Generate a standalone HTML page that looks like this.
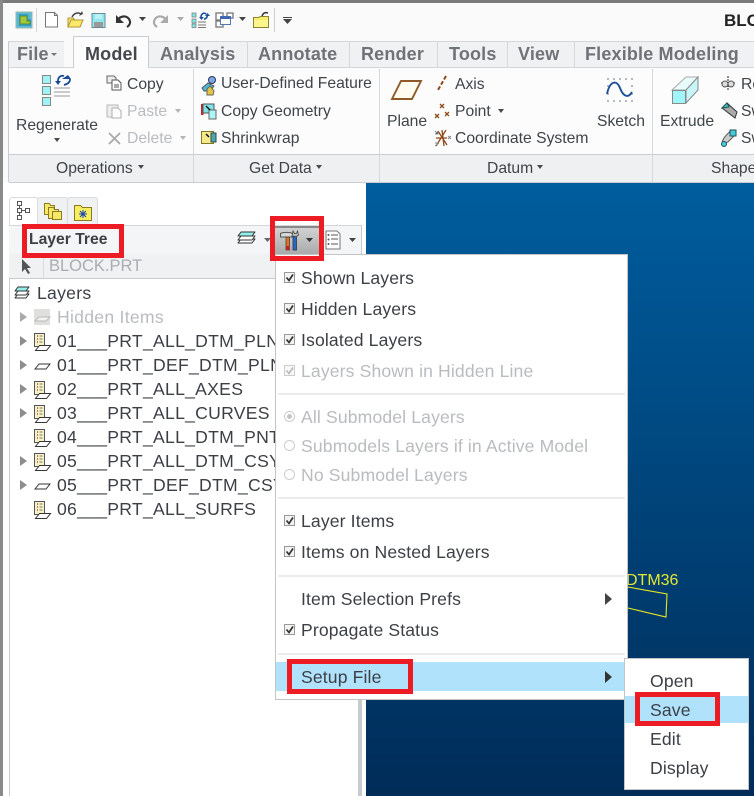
<!DOCTYPE html>
<html><head><meta charset="utf-8"><style>
html,body{margin:0;padding:0}
body{width:754px;height:796px;overflow:hidden;position:relative;background:#fafafa;font-family:"Liberation Sans",sans-serif;color:#3f444a}
.a,.t,svg.i{position:absolute}
.t{font-size:15.7px;line-height:20px;white-space:nowrap}
.tab{font-weight:bold;font-size:18px;letter-spacing:.17px;color:#6f7277;line-height:20px;position:absolute;white-space:nowrap}
.m{font-size:17.6px;letter-spacing:.13px;line-height:20px;position:absolute;white-space:nowrap;color:#3c4046}
.tr{font-size:17.6px;letter-spacing:.27px;line-height:20px;position:absolute;white-space:nowrap;color:#3c4046;left:57px}
.t.g,.m.g,.tr.g{color:#b9bcbf}
.r{position:absolute;border:5px solid #ed1c24;box-sizing:border-box}
.d{position:absolute;width:0;height:0;border-left:3.5px solid transparent;border-right:3.5px solid transparent;border-top:4px solid #4a4a4a}
.dg{border-top-color:#b5b5b5}
.sep{position:absolute;background:#ebebeb;height:2px;left:278px;width:347px}
.vl{position:absolute;background:#d5d8db;width:1px}
.exp{position:absolute;left:20px;width:0;height:0;border-top:5px solid transparent;border-bottom:5px solid transparent;border-left:7px solid #8d8d8d}
.clip{position:absolute;overflow:hidden;white-space:nowrap}
</style></head><body>
<!-- window frame -->
<div class="a" style="left:0;top:0;width:754px;height:3px;background:#7a7a7a"></div>
<div class="a" style="left:0;top:0;width:3px;height:796px;background:#8a8a8a"></div>

<!-- QAT -->
<svg class="i" style="left:0;top:0" width="300" height="40" viewBox="0 0 300 40">
<rect x="16" y="12" width="16" height="16" fill="#57b8d8" stroke="#9fb8a8"/><path d="M19 14h9v5h3v7H19z" fill="#2f9fd0"/><path d="M20 16h7v5h3v3H20z" fill="#a3c83c" stroke="#5c8a2c"/>
<rect x="36" y="8" width="1" height="24" fill="#d8d8d8"/>
<path d="M45.500 12.500h9l3 3v11.500h-12z" fill="#fff" stroke="#777"/><path d="M54.500 12.500v3h3" fill="none" stroke="#777"/>
<path d="M68 18h5l2 2h7l-2 7H68z" fill="#f5e36a" stroke="#b09a30"/><path d="M68 27l3-7h12l-3 7z" fill="#fbe96e" stroke="#b09a30"/><path d="M72 17c2-4 6-5 9-3" fill="none" stroke="#444" stroke-width="1.500"/><path d="M79 16l4-2-1-3z" fill="#444"/>
<rect x="92" y="13.500" width="13" height="14" fill="#8fe8ee" stroke="#6d8a92"/><rect x="94" y="22" width="9" height="5" fill="#999"/><rect x="95" y="14" width="7" height="5" fill="#b9f2f4"/>
<path d="M118 20c2-4 8-5 11-1 2 3 1 6-2 8" fill="none" stroke="#333" stroke-width="2.200"/><path d="M116 15v8h8z" fill="#333"/>
<path d="M139 17h7l-3.500 4z" fill="#444"/>
<path d="M166 20c-2-4-8-5-11-1-2 3-1 6 2 8" fill="none" stroke="#aaa" stroke-width="2.200"/><path d="M168 15v8h-8z" fill="#aaa"/>
<path d="M177 17h7l-3.500 4z" fill="#aaa"/>
<rect x="192" y="13" width="4" height="4" fill="#7fe6e6" stroke="#777" stroke-width=".7"/><rect x="192" y="19" width="4" height="4" fill="#7fe6e6" stroke="#777" stroke-width=".7"/><rect x="192" y="24" width="4" height="3.500" fill="#7fe6e6" stroke="#777" stroke-width=".7"/>
<path d="M198 22h8M198 25h8M198 27.500h8" stroke="#777"/><path d="M201 17c0-3 3-5 5-3M207 14c1 3-1 5-3 5" fill="none" stroke="#1a4fa0" stroke-width="1.600"/><path d="M199 17h5l-2.500 3zM205 16h5l-2.500-3z" fill="#1a4fa0"/>
<rect x="216" y="13" width="7" height="7" fill="#fff" stroke="#777" stroke-width="1.300"/><rect x="216" y="21" width="7" height="6" fill="#fff" stroke="#777" stroke-width="1.300"/><rect x="227" y="13" width="6" height="5" fill="#fff" stroke="#777" stroke-width="1.300"/><rect x="220.500" y="16.500" width="10" height="8" fill="#fff" stroke="#5077b8"/><rect x="220.500" y="16.500" width="10" height="2.500" fill="#3a66b0"/>
<path d="M239 17h7l-3.500 4z" fill="#444"/>
<path d="M253.500 17.500h5l2-1h8v11h-15z" fill="#f8ef70" stroke="#8c8530"/><path d="M254 20h14v7h-14z" fill="#fdf68c"/><path d="M262 16c1-3 3-4 6-3" fill="none" stroke="#333" stroke-width="1.500"/>
<rect x="274" y="8" width="1" height="24" fill="#cfcfcf"/>
<rect x="283" y="17" width="9" height="1" fill="#444"/><path d="M283 19h9l-4.500 5z" fill="#444"/>
</svg>
<div class="clip" style="left:724px;top:11px;width:30px;height:22px;font-weight:bold;font-size:17px;line-height:20px;color:#222">BLOCK</div>

<!-- tab bar -->
<div class="a" style="left:8px;top:41px;width:746px;height:26px;background:#f0f1f3;border-top:1px solid #d4d6d9;box-sizing:border-box"></div>
<div class="a" style="left:8px;top:41px;width:1px;height:141px;background:#c9ccd0"></div>
<div class="a" style="left:64px;top:41px;width:9px;height:26px;background:#fafafa"></div>
<div class="a" style="left:73px;top:36px;width:76px;height:32px;background:#fcfcfc;border:1px solid #c9ccd0;border-bottom:none;box-sizing:border-box;z-index:1"></div>
<div class="tab" style="left:17px;top:44px;z-index:2">File</div><div class="a" style="left:51px;top:53px;border-left:3px solid transparent;border-right:3px solid transparent;border-top:3px solid #777;z-index:2"></div>
<div class="tab" style="left:85px;top:44px;color:#44474b;z-index:2">Model</div>
<div class="tab" style="left:160px;top:44px">Analysis</div>
<div class="tab" style="left:258px;top:44px">Annotate</div>
<div class="tab" style="left:361px;top:44px">Render</div>
<div class="tab" style="left:449px;top:44px">Tools</div>
<div class="tab" style="left:518px;top:44px">View</div>
<div class="tab" style="left:585px;top:44px">Flexible Modeling</div>
<div class="vl" style="left:247px;top:41px;height:26px"></div><div class="vl" style="left:349px;top:41px;height:26px"></div><div class="vl" style="left:437px;top:41px;height:26px"></div><div class="vl" style="left:507px;top:41px;height:26px"></div><div class="vl" style="left:574px;top:41px;height:26px"></div>

<!-- ribbon -->
<div class="a" style="left:9px;top:67px;width:745px;height:87px;background:#fcfcfc;border-top:1px solid #d4d6d9;box-sizing:border-box"></div>
<div class="a" style="left:9px;top:154px;width:745px;height:29px;background:#eff0f2;border-top:1px solid #c9ccd0;border-bottom:1px solid #c9ccd0;box-sizing:border-box"></div>
<div class="vl" style="left:193px;top:69px;height:113px"></div><div class="vl" style="left:379px;top:69px;height:113px"></div><div class="vl" style="left:652px;top:69px;height:113px"></div>
<svg class="i" style="left:0;top:68px" width="754" height="90" viewBox="0 68 754 90">
<g fill="#9ff2f6" stroke="#888"><rect x="42.500" y="75.500" width="8" height="8"/><rect x="42.500" y="86.500" width="8" height="8"/><rect x="42.500" y="97.500" width="8" height="8"/></g>
<path d="M54 88h16M54 92h16M54 96h16" stroke="#999"/><path d="M58 81c0-4 3-6 6-5M70 79c0 4-3 5-6 6" fill="none" stroke="#1a4a9a" stroke-width="1.800"/><path d="M55 81h6l-3 4zM62 79h9l-3-4z" fill="#1a4a9a"/>
<path d="M107 76h7l2 2v5h-9z" fill="#eee" stroke="#666"/><path d="M112 80h6l3 3v7h-9z" fill="#fff" stroke="#555"/><path d="M114 85h5M114 87h5" stroke="#555"/>
<g opacity=".45"><path d="M107 105h11v12h-11z" fill="#ddd" stroke="#666"/><path d="M112 108h6l3 3v7h-9z" fill="#fff" stroke="#555"/></g>
<path d="M109 133l11 11M120 133l-11 11" stroke="#a8a8a8" stroke-width="1.700"/>
<path d="M202 88l6-5 6 3-4 5h-6z" fill="#4fb8d8" stroke="#555"/><circle cx="212" cy="80" r="3.500" fill="#7aa7e8" stroke="#335"/><path d="M207 89l3-3 4 5-1 4h-6z" fill="#e0c54a" stroke="#665"/>
<rect x="201" y="104" width="2.500" height="11" fill="#c22"/><rect x="203" y="104" width="11" height="9" fill="#7ce4e8" stroke="#555"/><rect x="209" y="110" width="7" height="9" fill="#aef5f7" stroke="#666"/><path d="M206 106l4 4" stroke="#111" stroke-width="1.500"/>
<rect x="201.500" y="131.500" width="12" height="12" fill="#f6e98a" stroke="#807820"/><rect x="211" y="133" width="5" height="9" fill="#4fa8a8" stroke="#345"/><path d="M206 134l3 3" stroke="#111" stroke-width="1.500"/>
<path d="M392 99l9-18h20l-9 18z" fill="#fffdf0" stroke="#8f5a2a" stroke-width="1.900"/>
<path d="M446 76l-8 14" stroke="#8f4a1a" stroke-width="2" stroke-dasharray="4 2"/>
<g stroke="#8f4a1a" stroke-width="1.300"><path d="M440 104l4 4M444 104l-4 4M435 114l4 4M439 114l-4 4M445 112l4 4M449 112l-4 4"/><path d="M442 130l2 16M436 146l10-16M438 131l9 14M436 138h11"/></g>
<g stroke="#888"><path d="M435 131l3 3M435 134h3v-3M448 136l3 3M451 136l-3 3M435 143h4M435 146l4-3"/></g>
<g fill="#9aa6b2"><circle cx="608" cy="79" r="1"/><circle cx="614" cy="79" r="1"/><circle cx="620" cy="79" r="1"/><circle cx="626" cy="79" r="1"/><circle cx="632" cy="79" r="1"/><circle cx="608" cy="86" r="1"/><circle cx="632" cy="86" r="1"/><circle cx="608" cy="94" r="1"/><circle cx="632" cy="94" r="1"/><circle cx="608" cy="101" r="1"/><circle cx="614" cy="101" r="1"/><circle cx="620" cy="101" r="1"/><circle cx="626" cy="101" r="1"/><circle cx="632" cy="101" r="1"/></g>
<path d="M607 94c3-14 10-14 13-6s8 11 12 4" fill="none" stroke="#1f4f9a" stroke-width="1.900"/>
<path d="M672 90l14-13h12l-12 13z" fill="#e8fbfc" stroke="#aaa"/><path d="M686 90l12-13v13l-12 13z" fill="#c8f6f8" stroke="#888"/>
<rect x="672.500" y="90.500" width="13" height="13" fill="#9ff5f8" stroke="#888"/>
<path d="M721 83h14M728 76v15" stroke="#222" stroke-dasharray="2 1"/><circle cx="725" cy="84" r="3" fill="#ddd" stroke="#555"/><circle cx="731" cy="84" r="3" fill="#ddd" stroke="#555"/>
<path d="M722 108l5-5 10 9-2 6z" fill="#aaa" stroke="#333"/><path d="M722 108l5-5 2 4z" fill="#3cc" stroke="#255"/>
<path d="M722 144c0-6 6-10 9-14l5 4-8 8z" fill="#ccc" stroke="#555"/><circle cx="724" cy="144" r="2.500" fill="#4cd" stroke="#255"/><rect x="730" y="130" width="6" height="6" fill="#4cd" stroke="#255"/>
</svg>
<div class="t" style="left:16px;top:116px">Regenerate</div><div class="d" style="left:54px;top:138px"></div>
<div class="t" style="left:127px;top:75px">Copy</div>
<div class="t g" style="left:127px;top:102px">Paste</div><div class="d dg" style="left:175px;top:109px"></div>
<div class="t g" style="left:127px;top:129px">Delete</div><div class="d dg" style="left:180px;top:136px"></div>
<div class="t" style="left:221px;top:74px">User-Defined Feature</div>
<div class="t" style="left:221px;top:102px">Copy Geometry</div>
<div class="t" style="left:221px;top:129px">Shrinkwrap</div>
<div class="t" style="left:387px;top:112px">Plane</div>
<div class="t" style="left:455px;top:75px">Axis</div>
<div class="t" style="left:455px;top:102px">Point</div><div class="d" style="left:498px;top:109px"></div>
<div class="t" style="left:455px;top:129px">Coordinate System</div>
<div class="t" style="left:597px;top:112px">Sketch</div>
<div class="t" style="left:660px;top:112px">Extrude</div>
<div class="clip t" style="left:741px;top:75px;width:13px">Revolve</div>
<div class="clip t" style="left:741px;top:102px;width:13px">Sweep</div>
<div class="clip t" style="left:741px;top:129px;width:13px">Swept Blend</div>
<div class="t" style="left:56px;top:159px">Operations</div><div class="d" style="left:138px;top:165px"></div>
<div class="t" style="left:249px;top:159px">Get Data</div><div class="d" style="left:316px;top:165px"></div>
<div class="t" style="left:487px;top:159px">Datum</div><div class="d" style="left:537px;top:165px"></div>
<div class="t" style="left:711px;top:159px">Shape</div>

<!-- background and viewport -->
<div class="a" style="left:3px;top:183px;width:363px;height:613px;background:#fff"></div>
<div class="a" style="left:366px;top:183px;width:388px;height:613px;background:linear-gradient(#005d9e,#002c58)"></div>
<div class="a" style="left:358px;top:225px;width:4px;height:571px;background:#c8cbce"></div>
<div class="a" style="left:9px;top:279px;width:1px;height:517px;background:#c8cbce"></div>
<div class="a" style="left:626px;top:572px;font-size:16px;line-height:18px;color:#e8e830">DTM36</div>
<svg class="i" style="left:620px;top:580px" width="60" height="45"><path d="M8 7L47 14 46 37 8 28" fill="none" stroke="#e8e820" stroke-width="1.100"/></svg>

<!-- panel head -->
<div class="a" style="left:37px;top:197px;width:31px;height:28px;background:#f0f1f3;border:1px solid #d8dadd;border-bottom:0;border-radius:3px 3px 0 0;box-sizing:border-box"></div>
<div class="a" style="left:67px;top:197px;width:31px;height:28px;background:#f0f1f3;border:1px solid #d8dadd;border-bottom:0;border-radius:3px 3px 0 0;box-sizing:border-box"></div>
<div class="a" style="left:9px;top:197px;width:29px;height:29px;background:#fff;border:1px solid #d8dadd;border-bottom:0;border-radius:3px 3px 0 0;box-sizing:border-box"></div>
<div class="a" style="left:9px;top:225px;width:352px;height:30px;background:#f4f5f6;border-top:1px solid #d4d6d9;box-sizing:border-box"></div>
<div class="a" style="left:9px;top:254px;width:267px;height:25px;background:#f0f1f3;border-bottom:1px solid #c8cbce;box-sizing:border-box"></div>
<div class="a" style="left:43px;top:254px;width:1px;height:25px;background:#d8dadd"></div>
<svg class="i" style="left:0;top:190px" width="370" height="90" viewBox="0 190 370 90">
<g fill="#fff" stroke="#555"><rect x="17.500" y="201.500" width="4" height="4"/><rect x="17.500" y="208.500" width="4" height="4"/><rect x="17.500" y="215.500" width="4" height="4"/><rect x="25.500" y="208.500" width="4" height="4"/></g><path d="M19.500 206v2M19.500 213v2M22 210.500h3" stroke="#555"/>
<g stroke="#8c7b20" fill="#f8e868"><path d="M44.500 203.500h5l1 2h4v9h-10z"/><path d="M48.500 207.500h5l1 2h4v9h-10z"/><path d="M52.500 211.500h9v8h-9z"/></g>
<path d="M74.500 205.500h6l2 2h9v13h-17z" fill="#f8ee62" stroke="#8c7b20"/><path d="M83 210v8M79 214h8M80 211l6 6M86 211l-6 6" stroke="#1743b0"/>
<g stroke="#333" stroke-linejoin="round"><path d="M238 243l3-4h14l-3 4z" fill="#fff"/><path d="M238 240l3-4h14l-3 4z" fill="#fff"/><path d="M238 236l3-4h14l-3 4z" fill="#92efea"/></g>
<path d="M264 238h7l-3.500 4z" fill="#666"/>
<defs><linearGradient id="hb" x1="0" y1="0" x2="0" y2="1"><stop offset="0" stop-color="#d4d5d5"/><stop offset="1" stop-color="#a9aaaa"/></linearGradient></defs>
<rect x="275" y="226" width="45" height="28" fill="url(#hb)"/><rect x="275" y="226" width="45" height="2" fill="#888"/>
<path d="M280.500 233.500c3-1.500 9-1.500 12 0v3.500h-12z" fill="#d8d8d8" stroke="#555"/><rect x="286" y="237" width="3.500" height="13" fill="#e2701c" stroke="#444" stroke-width=".8"/><rect x="286" y="246" width="3.500" height="4" fill="#c82020"/><rect x="293" y="236" width="3.500" height="14" fill="#2468c8" stroke="#334" stroke-width=".8"/><path d="M292 236l1-5 1.500 2.500 2-.2 1-2.300 1 4-2 1.500z" fill="#bbb" stroke="#444" stroke-width=".8"/>
<path d="M306 238h7l-3.500 4z" fill="#333"/>
<path d="M326 231h11l3 3v15h-14z" fill="#fff" stroke="#777"/><path d="M331 235h7M331 239h7M331 244h7" stroke="#555"/><circle cx="328.500" cy="235" r="1" fill="#555"/><circle cx="328.500" cy="239.500" r="1" fill="#555"/><circle cx="328.500" cy="244" r="1" fill="#555"/>
<path d="M349 238h7l-3.500 4z" fill="#444"/>
<path d="M22 259v13l3-3 3 5 2-1-3-5h4z" fill="#555"/>
</svg>
<div class="t" style="left:29px;top:230px;font-weight:bold;color:#3d4045">Layer Tree</div>
<div class="a" style="left:49px;top:256px;font-size:16.500px;line-height:20px;color:#a9adb0">BLOCK.PRT</div>

<!-- tree -->
<svg class="i" style="left:0;top:280px" width="60" height="240" viewBox="0 280 60 240">
<g stroke="#333" stroke-linejoin="round"><path d="M15 298l3-4h11l-3 4z" fill="#fff"/><path d="M15 295l3-4h11l-3 4z" fill="#fff"/><path d="M15 291l3-4h11l-3 4z" fill="#92efea"/></g>
<rect x="34" y="309" width="16" height="16" fill="#dfe0dd"/><path d="M35 321l4-4h11l-4 4z" fill="#f2f2ee" stroke="#bbb"/>
<defs><g id="ly"><rect x="0.500" y="0.500" width="10" height="13" fill="#f8f3c4" stroke="#555"/><path d="M3 3h1M3 6h1M3 9h1" stroke="#a22" stroke-width="1.300"/><path d="M5.500 3h3M5.500 6h3M5.500 9h3" stroke="#777"/><path d="M1.500 17.500l4-5h11l-4 5z" fill="#fff" stroke="#333"/></g>
<path id="pl" d="M1 8l4-5h11l-4 5z" fill="#fff" stroke="#333"/></defs>
<use href="#ly" x="34" y="333"/><use href="#pl" x="34" y="361"/><use href="#ly" x="34" y="381"/><use href="#ly" x="34" y="405"/><use href="#ly" x="34" y="429"/><use href="#ly" x="34" y="453"/><use href="#pl" x="34" y="481"/><use href="#ly" x="34" y="501"/>
</svg>
<div class="exp" style="top:312px;border-left-color:#aaa"></div><div class="exp" style="top:336px"></div><div class="exp" style="top:360px"></div><div class="exp" style="top:384px"></div><div class="exp" style="top:408px"></div><div class="exp" style="top:456px"></div><div class="exp" style="top:480px"></div>
<div class="tr" style="left:37px;top:283px">Layers</div>
<div class="tr g" style="top:307px">Hidden Items</div>
<div class="tr" style="top:331px">01___PRT_ALL_DTM_PLN</div>
<div class="tr" style="top:355px">01___PRT_DEF_DTM_PLN</div>
<div class="tr" style="top:379px">02___PRT_ALL_AXES</div>
<div class="tr" style="top:403px">03___PRT_ALL_CURVES</div>
<div class="tr" style="top:427px">04___PRT_ALL_DTM_PNT</div>
<div class="tr" style="top:451px">05___PRT_ALL_DTM_CSYS</div>
<div class="tr" style="top:475px">05___PRT_DEF_DTM_CSYS</div>
<div class="tr" style="top:499px">06___PRT_ALL_SURFS</div>

<!-- main menu -->
<div class="a" style="left:275px;top:254px;width:353px;height:446px;background:#fff;border:1px solid #c2c4c6;box-sizing:border-box;overflow:hidden">
<div class="m" style="left:25px;top:13px">Shown Layers</div>
<div class="m" style="left:25px;top:44px">Hidden Layers</div>
<div class="m" style="left:25px;top:75px">Isolated Layers</div>
<div class="m g" style="left:25px;top:106px">Layers Shown in Hidden Line</div>
<div class="m g" style="left:25px;top:152px">All Submodel Layers</div>
<div class="m g" style="left:25px;top:181px">Submodels Layers if in Active Model</div>
<div class="m g" style="left:25px;top:210px">No Submodel Layers</div>
<div class="m" style="left:25px;top:256px">Layer Items</div>
<div class="m" style="left:25px;top:287px">Items on Nested Layers</div>
<div class="m" style="left:25px;top:334px">Item Selection Prefs</div>
<div class="m" style="left:25px;top:365px">Propagate Status</div>
<div class="a" style="left:0;top:407px;width:351px;height:29px;background:#b0e2fc"></div>
<div class="m" style="left:25px;top:412px">Setup File</div>
</div>
<div class="sep" style="top:393px"></div><div class="sep" style="top:497px"></div><div class="sep" style="top:575px"></div><div class="sep" style="top:653px"></div>
<svg class="i" style="left:275px;top:254px" width="353" height="446" viewBox="275 254 353 446">
<defs><g id="c"><rect x="0.500" y="0.500" width="10" height="10" fill="#f2f2f2" stroke="#999"/><path d="M2.500 5.500l2.500 3L9 2.500" fill="none" stroke="#333" stroke-width="1.700"/></g>
<g id="cg"><rect x="0.500" y="0.500" width="10" height="10" fill="#f8f8f8" stroke="#ccc"/><path d="M2.500 5.500l2.500 3L9 2.500" fill="none" stroke="#bbb" stroke-width="1.700"/></g></defs>
<use href="#c" x="284" y="272"/><use href="#c" x="284" y="303"/><use href="#c" x="284" y="334"/><use href="#cg" x="284" y="365"/>
<circle cx="289.500" cy="416.500" r="5" fill="#fff" stroke="#ccc"/><circle cx="289.500" cy="416.500" r="2.500" fill="#c4c4c4"/>
<circle cx="289.500" cy="445.500" r="5" fill="#fff" stroke="#ccc"/><circle cx="289.500" cy="474.500" r="5" fill="#fff" stroke="#ccc"/>
<use href="#c" x="284" y="515"/><use href="#c" x="284" y="546"/><use href="#c" x="284" y="624"/>
<path d="M605 593l7 6-7 6z" fill="#444"/><path d="M605 671l7 6-7 6z" fill="#333"/>
</svg>

<!-- submenu -->
<div class="a" style="left:624px;top:658px;width:125px;height:132px;background:#fff;border:1px solid #c2c4c6;box-sizing:border-box"></div>
<div class="a" style="left:625px;top:696px;width:123px;height:27px;background:#b0e2fc"></div>
<div class="m" style="left:650px;top:671px">Open</div>
<div class="m" style="left:650px;top:700px">Save</div>
<div class="m" style="left:650px;top:729px">Edit</div>
<div class="m" style="left:650px;top:758px">Display</div>

<!-- annotations -->
<div class="r" style="left:22px;top:224px;width:102px;height:34px"></div>
<div class="r" style="left:270px;top:216px;width:54px;height:45px"></div>
<div class="r" style="left:287px;top:659px;width:126px;height:35px"></div>
<div class="r" style="left:635px;top:692px;width:85px;height:34px"></div>
</body></html>
